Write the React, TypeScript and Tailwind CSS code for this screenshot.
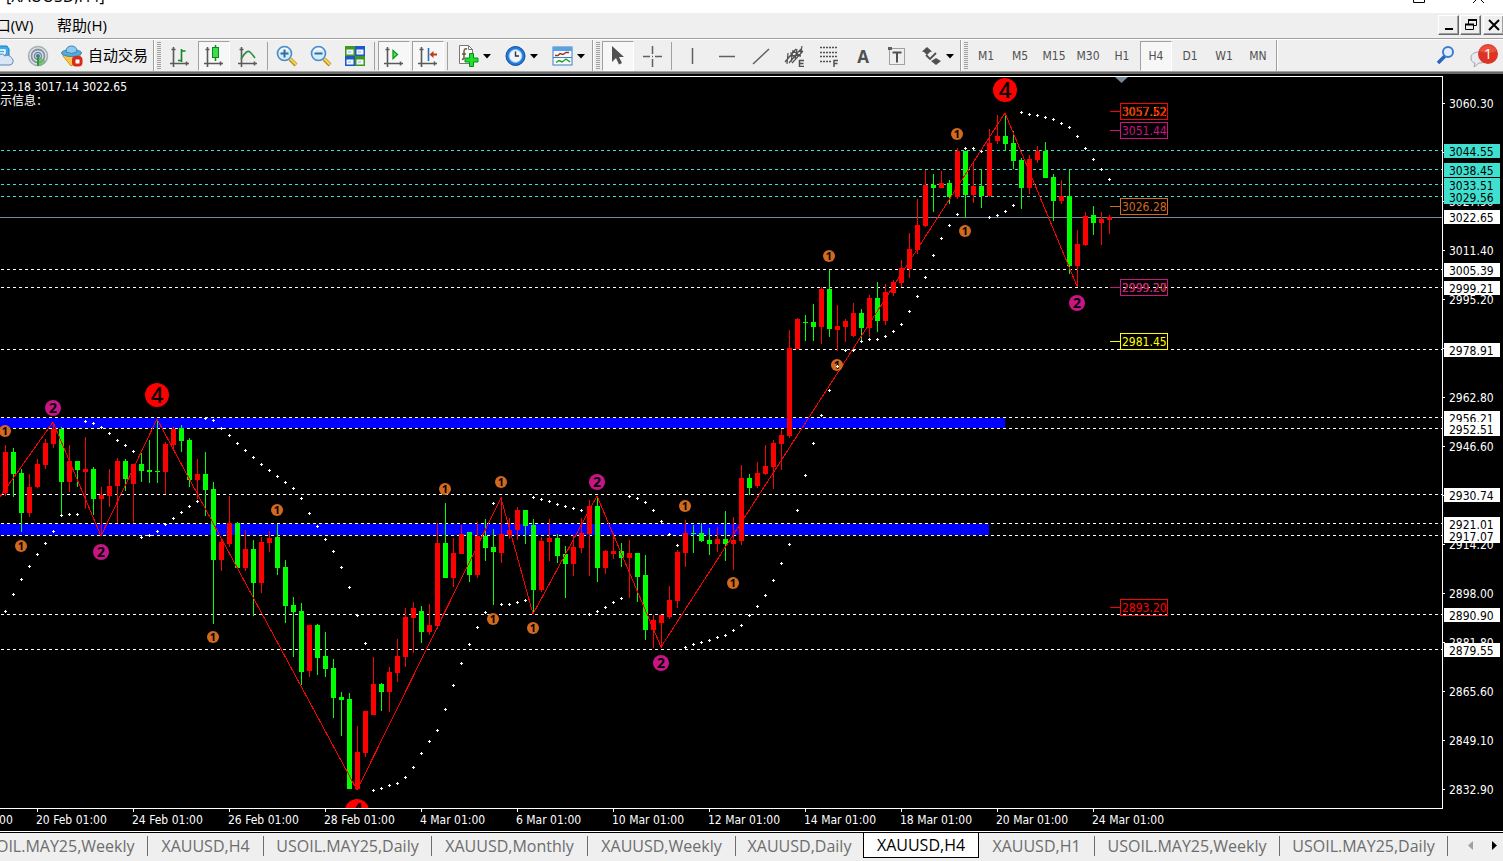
import type { ReactNode } from "react";

type Candle = ["r" | "g", number, number, number, number];

// colour, high, body top, body bottom, low; one candle every 8px starting at x = 5
const candles: Candle[] = [
  ["r", 445, 452, 493, 496], ["g", 448, 452, 474, 497], ["g", 469, 473, 513, 532], ["r", 474, 487, 513, 517],
  ["r", 459, 464, 487, 488], ["r", 439, 443, 465, 469], ["r", 422, 429, 444, 448], ["g", 427, 429, 482, 515],
  ["r", 445, 461, 482, 492], ["g", 461, 461, 470, 487], ["r", 437, 469, 472, 509], ["g", 467, 469, 499, 515],
  ["r", 487, 495, 499, 536], ["r", 469, 486, 496, 507], ["r", 458, 461, 486, 523], ["g", 459, 461, 479, 491],
  ["r", 464, 464, 484, 523], ["g", 453, 464, 471, 482], ["g", 440, 470, 472, 483], ["g", 419, 471, 472, 483],
  ["r", 442, 444, 472, 494], ["r", 427, 429, 445, 449], ["g", 425, 428, 441, 452], ["g", 438, 440, 480, 487],
  ["r", 459, 474, 480, 499], ["g", 452, 474, 490, 516], ["g", 482, 489, 560, 624], ["r", 538, 542, 560, 571],
  ["r", 496, 523, 544, 547], ["g", 522, 523, 568, 568], ["r", 530, 549, 568, 571], ["g", 540, 549, 583, 616],
  ["r", 537, 542, 583, 593], ["r", 531, 538, 543, 552], ["g", 524, 537, 568, 575], ["g", 560, 567, 606, 623],
  ["g", 597, 605, 612, 657], ["g", 603, 611, 672, 685], ["r", 625, 625, 671, 677], ["g", 624, 625, 658, 675],
  ["g", 632, 656, 669, 677], ["g", 659, 668, 698, 718], ["g", 692, 697, 700, 736], ["g", 693, 699, 789, 789],
  ["r", 726, 752, 789, 790], ["r", 711, 711, 753, 757], ["r", 657, 684, 715, 715], ["g", 683, 684, 692, 711],
  ["r", 667, 672, 692, 712], ["r", 639, 656, 673, 682], ["r", 608, 617, 657, 667], ["r", 602, 608, 618, 653],
  ["g", 606, 611, 632, 643], ["r", 604, 625, 632, 635], ["r", 523, 543, 626, 629], ["g", 503, 543, 578, 578],
  ["r", 538, 553, 578, 587], ["r", 525, 534, 554, 554], ["g", 532, 532, 575, 582], ["r", 522, 536, 575, 578],
  ["g", 519, 536, 548, 561], ["g", 529, 547, 552, 605], ["r", 497, 534, 553, 563], ["r", 518, 530, 535, 539],
  ["r", 507, 510, 530, 540], ["g", 510, 510, 526, 544], ["g", 519, 525, 590, 614], ["r", 537, 541, 590, 592],
  ["r", 519, 538, 542, 561], ["g", 534, 538, 556, 563], ["g", 546, 554, 564, 598], ["r", 535, 547, 564, 576],
  ["r", 518, 533, 548, 553], ["r", 500, 506, 534, 576], ["g", 496, 506, 568, 582], ["r", 550, 551, 568, 574],
  ["r", 533, 551, 554, 559], ["g", 543, 551, 558, 567], ["r", 540, 553, 558, 598], ["g", 553, 553, 577, 602],
  ["g", 555, 575, 630, 640], ["r", 615, 620, 630, 648], ["r", 615, 615, 623, 648], ["r", 586, 600, 617, 619],
  ["r", 550, 552, 601, 608], ["r", 520, 533, 553, 567], ["g", 525, 533, 534, 553], ["g", 523, 533, 541, 542],
  ["g", 528, 540, 544, 555], ["r", 527, 539, 544, 552], ["g", 511, 539, 544, 561], ["r", 517, 540, 544, 570],
  ["r", 465, 478, 541, 545], ["g", 474, 478, 488, 495], ["r", 462, 473, 486, 488], ["r", 445, 466, 474, 475],
  ["r", 440, 443, 467, 489], ["r", 429, 435, 444, 470], ["r", 330, 348, 436, 438], ["r", 318, 319, 349, 349],
  ["g", 315, 322, 323, 341], ["g", 304, 322, 327, 341], ["r", 287, 289, 327, 344], ["g", 270, 289, 329, 337],
  ["r", 305, 326, 330, 351], ["r", 319, 321, 327, 342], ["r", 303, 313, 336, 337], ["g", 309, 313, 328, 341],
  ["r", 295, 298, 328, 337], ["g", 282, 298, 321, 332], ["r", 284, 292, 321, 325], ["r", 280, 282, 293, 296],
  ["r", 260, 268, 283, 287], ["r", 233, 249, 269, 278], ["r", 199, 225, 250, 254], ["r", 170, 185, 226, 227],
  ["g", 174, 185, 188, 212], ["r", 171, 183, 188, 188], ["g", 180, 183, 197, 204], ["r", 148, 151, 197, 199],
  ["g", 151, 151, 195, 218], ["r", 162, 186, 195, 203], ["g", 169, 186, 196, 208], ["r", 129, 143, 196, 197],
  ["r", 115, 136, 141, 144], ["g", 113, 136, 144, 151], ["g", 131, 143, 161, 169], ["g", 158, 160, 188, 209],
  ["r", 155, 159, 188, 194], ["r", 146, 151, 160, 163], ["g", 142, 151, 178, 178], ["g", 174, 177, 201, 221],
  ["r", 180, 196, 201, 204], ["g", 170, 196, 266, 274], ["r", 230, 244, 266, 287], ["r", 212, 216, 245, 246],
  ["g", 206, 215, 223, 235], ["r", 212, 219, 223, 245], ["r", 215, 217, 220, 234],
];

// parabolic SAR, one value per candle
const sar: number[] = [
  611, 594, 579, 566, 554, 543, 531, 515, 514, 514, 421, 423, 427, 433, 440, 445, 451, 537, 535, 531, 524, 518, 512,
  506, 501, 418, 420, 428, 435, 443, 450, 457, 464, 470, 476, 482, 488, 498, 513, 526, 539, 551, 567, 587, 615, 643,
  790, 788, 785, 783, 777, 767, 753, 741, 730, 709, 685, 663, 644, 627, 612, 503, 604, 604, 602, 600, 497, 499, 501,
  504, 506, 508, 510, 614, 611, 607, 602, 598, 496, 498, 502, 510, 521, 534, 545, 647, 644, 642, 640, 637, 635, 630,
  625, 615, 606, 595, 580, 563, 544, 510, 475, 443, 415, 390, 366, 350, 350, 341, 339, 339, 336, 331, 324, 311, 296,
  277, 255, 238, 225, 214, 148, 148, 151, 217, 215, 211, 205, 112, 114, 115, 117, 119, 123, 127, 136, 148, 159, 169,
  179,
];

const levels: { y: number; price: string; teal?: boolean }[] = [
  { y: 150, price: "3044.55", teal: true },
  { y: 169, price: "3038.45", teal: true },
  { y: 184, price: "3033.51", teal: true },
  { y: 196, price: "3029.56", teal: true },
  { y: 269, price: "3005.39" },
  { y: 287, price: "2999.21" },
  { y: 349, price: "2978.91" },
  { y: 417, price: "2956.21" },
  { y: 428, price: "2952.51" },
  { y: 494, price: "2930.74" },
  { y: 523, price: "2921.01" },
  { y: 535, price: "2917.07" },
  { y: 614, price: "2890.90" },
  { y: 649, price: "2879.55" },
];

const scale: [number, string][] = [
  [103, "3060.30"], [201, "3027.90"], [250, "3011.40"], [299, "2995.20"], [397, "2962.80"], [446, "2946.60"],
  [544, "2914.20"], [593, "2898.00"], [642, "2881.80"], [691, "2865.60"], [740, "2849.10"], [789, "2832.90"],
];

const dates = [
  "20 Feb 01:00", "24 Feb 01:00", "26 Feb 01:00", "28 Feb 01:00", "4 Mar 01:00", "6 Mar 01:00", "10 Mar 01:00",
  "12 Mar 01:00", "14 Mar 01:00", "18 Mar 01:00", "20 Mar 01:00", "24 Mar 01:00",
];

const waveMarks: [number, number, 1 | 2 | 4][] = [
  [5, 431, 1], [21, 546, 1], [213, 637, 1], [277, 510, 1], [445, 489, 1], [501, 482, 1], [493, 619, 1], [533, 628, 1],
  [685, 506, 1], [733, 583, 1], [829, 256, 1], [837, 365, 1], [957, 134, 1], [965, 231, 1],
  [53, 408, 2], [101, 552, 2], [597, 482, 2], [661, 663, 2], [1077, 303, 2],
  [157, 395, 4], [1005, 90, 4], [357, 811, 4],
];

const markStyle = {
  1: { r: 6, fill: "#d2691e", size: 11, weight: 700, drop: 4 },
  2: { r: 8, fill: "#c71585", size: 14, weight: 700, drop: 5 },
  4: { r: 12, fill: "#ff0000", size: 22, weight: 600, drop: 8 },
};

const tags: { y: number; text: string; color: string; under?: string; underColor?: string }[] = [
  { y: 111, text: "3057.62", color: "#ff0000", under: "3057.52", underColor: "#ffff00" },
  { y: 130, text: "3051.44", color: "#c71585" },
  { y: 206, text: "3026.28", color: "#d2691e" },
  { y: 287, text: "2999.27", color: "#c71585", under: "2999.20", underColor: "#d2691e" },
  { y: 341, text: "2981.45", color: "#ffff00" },
  { y: 607, text: "2893.20", color: "#ff0000" },
];

const chartFont = "font-['DejaVu_Sans_Condensed','DejaVu_Sans',sans-serif] text-[12px]";

function Plot() {
  return (
    <svg role="img" aria-label="XAUUSD H4 chart" className={"block h-[757px] min-w-0 flex-1 " + chartFont}>
      <g transform="translate(0,-74)">
        <g shapeRendering="crispEdges">
          <rect x={0} y={418} width={1005} height={10} fill="#0000ff" />
          <rect x={0} y={524} width={989} height={11} fill="#0000ff" />
          <rect x={0} y={217} width="100%" height={1} fill="#778899" />
          {levels.map((l) => (
            <line
              key={l.y}
              x1={1}
              x2="100%"
              y1={l.y + 0.5}
              y2={l.y + 0.5}
              stroke={l.teal ? "#40e0d0" : "#ffffff"}
              strokeDasharray="3 3"
            />
          ))}
          {candles.map(([c, high, top, bottom, low], i) => (
            <g key={i} fill={c === "r" ? "#ff0000" : "#00ff00"}>
              <rect x={5 + i * 8} y={high} width={1} height={low - high} />
              <rect x={3 + i * 8} y={top} width={5} height={bottom - top} />
            </g>
          ))}
          <polyline
            fill="none"
            stroke="#ff0000"
            points="-3,501 53,422 101,536 157,419 357,790 501,498 533,614 597,496 661,647 1005,113 1077,286"
          />
        </g>
        {waveMarks.map(([x, y, n]) => (
          <g key={x + "-" + y}>
            <circle cx={x} cy={y} r={markStyle[n].r} fill={markStyle[n].fill} />
            <text
              x={x}
              y={y + markStyle[n].drop}
              textAnchor="middle"
              fontSize={markStyle[n].size}
              fontWeight={markStyle[n].weight}
              fontFamily="'Open Sans', 'Noto Sans', sans-serif"
              fill="#000000"
            >
              {n}
            </text>
          </g>
        ))}
        <g shapeRendering="crispEdges" fill="#ffffff">
          {sar.map((y, i) => (
            <path key={i} d={`M${4 + i * 8} ${y}h1v-1h1v1h1v1h-1v1h-1v-1h-1z`} />
          ))}
        </g>
        {tags.map((t) => (
          <g key={t.y}>
            <path
              d={`M1110 ${t.y + 0.5}h10M1120.5 ${t.y - 7.5}h47v16h-47z`}
              fill="none"
              stroke={t.color}
              shapeRendering="crispEdges"
            />
            {t.under && (
              <text x={1122} y={t.y + 5} fill={t.underColor}>
                {t.under}
              </text>
            )}
            <text x={1122} y={t.y + 5} fill={t.color}>
              {t.text}
            </text>
          </g>
        ))}
        <path d="M1115 77h13l-6.500 6z" fill="#778899" />
        <text x={0} y={91} fill="#ffffff">
          23.18 3017.14 3022.65
        </text>
        <text x={0} y={105} fill="#ffffff" fontFamily="'Noto Sans CJK SC', sans-serif">
          示信息：
        </text>
        <g shapeRendering="crispEdges">
          <rect x={0} y={808} width="100%" height={24} fill="#000000" />
          <rect x={0} y={76} width="100%" height={1} fill="#ffffff" />
          <rect x={0} y={808} width="100%" height={1} fill="#ffffff" />
          {dates.map((d, i) => (
            <rect key={d} x={37 + i * 96} y={808} width={1} height={4} fill="#ffffff" />
          ))}
        </g>
        <text x={-58} y={824} fill="#ffffff">
          18 Feb 01:00
        </text>
        {dates.map((d, i) => (
          <text key={d} x={36 + i * 96} y={824} fill="#ffffff">
            {d}
          </text>
        ))}
      </g>
    </svg>
  );
}

function PriceScale() {
  const ticks = [103, 152, 201, 250, 299, 348, 397, 446, 495, 544, 593, 642, 691, 740, 789];
  return (
    <svg role="img" aria-label="Price scale" className={"block h-[757px] w-[61px] shrink-0 " + chartFont}>
      <g transform="translate(0,-74)">
        <rect x={0} y={76} width={1} height={733} fill="#ffffff" />
        {ticks.map((y) => (
          <rect key={y} x={1} y={y} width={2} height={1} fill="#ffffff" />
        ))}
        {scale.map(([y, p]) => (
          <text key={y} x={7} y={y + 5} fill="#ffffff">
            {p}
          </text>
        ))}
        {levels.map((l) => (
          <g key={l.y}>
            <rect x={2} y={l.y - 6} width={56} height={14} fill={l.teal ? "#40e0d0" : "#ffffff"} />
            <text x={7} y={l.y + 6} fill="#000000">
              {l.price}
            </text>
          </g>
        ))}
        <rect x={2} y={210} width={56} height={14} fill="#ffffff" />
        <text x={7} y={222} fill="#000000">
          3022.65
        </text>
      </g>
    </svg>
  );
}

function ToolButton({ label, pressed, children }: { label: string; pressed?: boolean; children: ReactNode }) {
  return (
    <button
      type="button"
      aria-label={label}
      aria-pressed={pressed}
      className={
        "flex h-[30px] w-8 shrink-0 items-center justify-center " +
        (pressed ? "border border-t-[#a0a0a0] border-r-white border-b-white border-l-[#a0a0a0] bg-[#f7f7f7]" : "")
      }
    >
      {children}
    </button>
  );
}

function DropButton({ label, children }: { label: string; children: ReactNode }) {
  return (
    <button type="button" aria-label={label} className="flex h-[30px] w-[45px] shrink-0 items-center gap-[3px] pl-[6px]">
      {children}
      <svg width="8" height="5" viewBox="0 0 8 5" className="mt-[2px]">
        <path d="M0 0h8L4 4.500z" fill="#000" />
      </svg>
    </button>
  );
}

function Divider() {
  return <div className="mx-[3px] h-7 w-px shrink-0 bg-[#a0a0a0]" />;
}

function Grip() {
  return (
    <div className="flex h-full shrink-0 items-center">
      <div className="h-full w-[2px] border-r border-l border-r-white border-l-[#a0a0a0]" />
      <div className="mx-[2px] h-7 w-[4px] bg-[repeating-linear-gradient(to_bottom,#a0a0a0_0_1px,#efefef_1px_2px)]" />
    </div>
  );
}

function Axes() {
  return <path d="M4.500 2v20M1 18.500h19M2.500 4.500h4M17.500 16.500v4" stroke="#5a5a5a" strokeWidth="1.600" fill="none" />;
}

function Icon({ children, w = 22 }: { children: ReactNode; w?: number }) {
  return (
    <svg width={w} height="22" viewBox={`0 0 ${w} 22`} fill="none" className="shrink-0">
      {children}
    </svg>
  );
}

function Magnifier({ plus }: { plus?: boolean }) {
  return (
    <Icon>
      <path d="M14 14l6 6" stroke="#b8901c" strokeWidth="4" />
      <path d="M14 13.500l6 6" stroke="#f3d65a" strokeWidth="2" />
      <circle cx="8.500" cy="8.500" r="7" fill="#d5ecfb" stroke="#4b8bc8" strokeWidth="1.600" />
      <path d="M4 7a5 5 0 0 1 8-2" stroke="#fff" strokeWidth="1.500" />
      <path d={plus ? "M4.500 8.500h8M8.500 4.500v8" : "M4.500 8.500h8"} stroke="#2f6f9f" strokeWidth="2" />
    </Icon>
  );
}

function Toolbar() {
  const periods = ["M1", "M5", "M15", "M30", "H1", "H4", "D1", "W1", "MN"];
  return (
    <div
      role="toolbar"
      className="flex h-8 items-center overflow-hidden border-b border-[#a0a0a0] bg-[#efefef] text-[#505050]"
    >
      <button type="button" aria-label="Virtual hosting" className="h-[30px] w-[22px] shrink-0">
        <Icon w={16}>
          <path d="M-4 3q0-2 2-2h9l2 3v9H-4z" fill="#3fa9ee" stroke="#1b7fc4" />
          <path d="M-2 5h7v3h-7M-2 10h7" stroke="#fff" strokeWidth="1.500" />
          <path d="M-4 20h14a4 4 0 0 0 1-7.500 4 4 0 0 0-6-1.500 5 5 0 0 0-9 3z" fill="#dbe6f4" stroke="#5f82b8" />
        </Icon>
      </button>
      <button type="button" aria-label="Signals" className="flex h-[30px] w-8 shrink-0 items-center justify-center">
        <Icon>
          <circle cx="11" cy="11" r="9.500" fill="#e3e7ea" stroke="#a4afb6" strokeWidth="1.600" />
          <circle cx="11" cy="11" r="6.500" stroke="#8592a0" strokeWidth="1.800" />
          <circle cx="11" cy="11" r="3.500" stroke="#748494" strokeWidth="1.500" />
          <path d="M11 11v10a10 10 0 0 0 8-5z" fill="#5cb85c" opacity=".7" />
          <circle cx="11" cy="11" r="2" fill="#3a73b8" />
          <path d="M11 11v10" stroke="#2f9a3a" strokeWidth="2" />
        </Icon>
      </button>
      <button type="button" className="flex h-[30px] w-24 shrink-0 items-center gap-[5px] pl-[7px] text-black">
        <Icon>
          <path d="M2 11l8 10 9-6V8H2z" fill="#f6c945" stroke="#c99a1c" />
          <ellipse cx="10.500" cy="8" rx="10" ry="3.500" fill="#5aa9dc" stroke="#3782b5" />
          <path d="M5 7q0-6 5.500-6T16 7q-5 3-11 0z" fill="#8ccbf0" stroke="#3782b5" />
          <rect x="11" y="11" width="10.500" height="10.500" rx="4" fill="#d62a1a" />
          <rect x="14.500" y="14.500" width="4" height="4" fill="#fff" />
        </Icon>
        <span className="pb-[2px] text-[15px] leading-5 whitespace-nowrap">自动交易</span>
      </button>
      <div className="w-[3px] shrink-0" />
      <Grip />
      <div className="ml-px flex shrink-0 items-center gap-[2px]">
        <ToolButton label="Bar chart">
          <Icon>
            <Axes />
            <path d="M12.500 4v13M9 15.500h3M13 6h3.500" stroke="#0a8a1c" strokeWidth="1.600" />
          </Icon>
        </ToolButton>
        <ToolButton label="Candlesticks" pressed>
          <Icon>
            <Axes />
            <path d="M12.500 0v16" stroke="#0a8a1c" strokeWidth="1.500" />
            <rect x="9.500" y="2.500" width="6" height="10" fill="#3fdc4c" stroke="#0a8a1c" />
          </Icon>
        </ToolButton>
        <ToolButton label="Line chart">
          <Icon>
            <Axes />
            <path d="M4 14q6-10 9-7t5 6" stroke="#2f8f3c" strokeWidth="1.600" />
          </Icon>
        </ToolButton>
      </div>
      <Divider />
      <div className="flex shrink-0 items-center gap-[2px]">
        <ToolButton label="Zoom in">
          <Magnifier plus />
        </ToolButton>
        <ToolButton label="Zoom out">
          <Magnifier />
        </ToolButton>
        <ToolButton label="Tile windows">
          <Icon>
            <rect x="1" y="1" width="10" height="10" fill="#3f9a1c" />
            <rect x="11" y="1" width="10" height="10" fill="#1f56c8" />
            <rect x="1" y="11" width="10" height="10" fill="#1f56c8" />
            <rect x="11" y="11" width="10" height="10" fill="#3f9a1c" />
            <path d="M2.500 4.500h7v5h-7zM12.500 4.500h7v5h-7zM2.500 14.500h7v5h-7zM12.500 14.500h7v5h-7z" fill="#eef5ff" />
            <path d="M4 7h3M14 7h3M4 17h3M14 17h3" stroke="#9ab4d8" />
          </Icon>
        </ToolButton>
      </div>
      <Divider />
      <div className="flex shrink-0 items-center gap-[2px]">
        <ToolButton label="Auto scroll" pressed>
          <Icon>
            <Axes />
            <path d="M10 5.500v8l4.500-4z" fill="#5fe06a" stroke="#0a9a1c" strokeWidth="1.300" />
          </Icon>
        </ToolButton>
        <ToolButton label="Chart shift" pressed>
          <Icon>
            <Axes />
            <path d="M11.500 3v13" stroke="#2671b8" strokeWidth="1.600" />
            <path d="M12.500 9.500l4-3.500v2.500H20v2h-3.500V13z" fill="#c23c10" />
          </Icon>
        </ToolButton>
      </div>
      <Divider />
      <div className="ml-px flex shrink-0 items-center gap-[2px]">
        <DropButton label="Indicators">
          <Icon>
            <path d="M1.500.5h9l4 4v14h-13z" fill="#fafafa" stroke="#777" />
            <path d="M10.500.5v4h4" stroke="#777" />
            <path d="M9 4q-3-1-3 3v5q0 3-2 2M4 9h4" stroke="#6b5a3a" strokeWidth="1.500" />
            <path d="M11.500 8.500h4v4.500H20v4h-4.500v4.500h-4V17H7v-4h4.500z" fill="#1fe02c" stroke="#0a8a1c" />
          </Icon>
        </DropButton>
        <DropButton label="Periodicity">
          <Icon>
            <circle cx="10.500" cy="11" r="9.500" fill="#1f78dc" stroke="#0b4f9f" />
            <circle cx="10.500" cy="11" r="6.500" fill="#edf4fb" stroke="#8fb9e6" />
            <path d="M10.500 6.500V11H14" stroke="#333" strokeWidth="1.400" />
          </Icon>
        </DropButton>
        <DropButton label="Templates">
          <Icon>
            <rect x="1" y="2" width="19" height="18" fill="#f4faff" stroke="#3c7fc0" />
            <rect x="1" y="2" width="19" height="4" fill="#5aa2e4" />
            <path d="M1 12.500h19" stroke="#3c7fc0" />
            <path d="M3 10.500h3l2-2 3 1 3-2h3" stroke="#a0341c" strokeWidth="1.400" />
            <path d="M4 17.500l3-2 3 1.500 4-3 4 3" stroke="#1f9a2c" strokeWidth="1.400" />
          </Icon>
        </DropButton>
      </div>
      <div className="w-px shrink-0" />
      <Grip />
      <div className="flex shrink-0 items-center gap-[2px]">
        <ToolButton label="Cursor" pressed>
          <Icon>
            <path d="M5 1v16l4-4 3 6.500 3-1.500-3-6h5z" fill="#505050" />
          </Icon>
        </ToolButton>
        <ToolButton label="Crosshair">
          <Icon>
            <path d="M11.500 1v8M11.500 14v8M2 11.500h7M14 11.500h7M11 11.500h1" stroke="#606060" strokeWidth="1.500" />
          </Icon>
        </ToolButton>
      </div>
      <Divider />
      <div className="ml-[2px] flex shrink-0 items-center gap-[2px]">
        <ToolButton label="Vertical line">
          <Icon>
            <path d="M10.500 3v16" stroke="#606060" strokeWidth="1.500" />
          </Icon>
        </ToolButton>
        <ToolButton label="Horizontal line">
          <Icon>
            <path d="M3 11.500h16" stroke="#606060" strokeWidth="1.500" />
          </Icon>
        </ToolButton>
        <ToolButton label="Trend line">
          <Icon>
            <path d="M3 19L19 4" stroke="#606060" strokeWidth="1.500" />
          </Icon>
        </ToolButton>
        <ToolButton label="Equidistant channel">
          <Icon>
            <path
              d="M1 17L12 4M5 18L17 4M8 18L19 6M4 8l-1 11M9 5L7 17M13 4l-2 11M18 1l-2 11M3 12l14-3M6 8l13-2"
              stroke="#505050"
              strokeWidth="1.200"
            />
            <path d="M20 15.500h-4.500v6H20M15.500 18.500h4" stroke="#505050" strokeWidth="1.500" />
          </Icon>
        </ToolButton>
        <ToolButton label="Fibonacci retracement">
          <Icon>
            <path
              d="M2 2.500h18M2 7.500h18M2 11.500h18M2 16.500h12"
              stroke="#505050"
              strokeWidth="1.300"
              strokeDasharray="2 1"
            />
            <path d="M20 15.500h-4v7M16 18.500h3.500" stroke="#505050" strokeWidth="1.500" />
          </Icon>
        </ToolButton>
        <ToolButton label="Text">
          <span className="pt-[2px] font-['Open_Sans',sans-serif] text-[17px] leading-5 font-bold">A</span>
        </ToolButton>
        <ToolButton label="Text label">
          <Icon>
            <rect x="3.500" y="3.500" width="15" height="16" stroke="#505050" strokeDasharray="1 1" />
            <path d="M6.500 7.500h9M11 7.500v10" stroke="#505050" strokeWidth="2" />
            <path d="M2 2h4v3H2z" fill="#606060" />
          </Icon>
        </ToolButton>
        <DropButton label="Arrows">
          <Icon>
            <path d="M6 2l5 4.500-2 .5-3 3-3-3-2-.5zM15 20l-5-4 2-1 3-2 3 2 2 1z" fill="#505050" />
            <path d="M5 10l4 4 6-6" stroke="#505050" strokeWidth="1.800" />
          </Icon>
        </DropButton>
      </div>
      <Grip />
      <div className="flex shrink-0 items-center gap-[2px] font-['DejaVu_Sans_Condensed','DejaVu_Sans',sans-serif] text-[12px]">
        {periods.map((p) => (
          <ToolButton key={p} label={p} pressed={p === "H4"}>
            {p}
          </ToolButton>
        ))}
      </div>
      <div className="ml-[2px] h-full w-[2px] shrink-0 border-r border-l border-r-white border-l-[#a0a0a0]" />
      <button type="button" aria-label="Search" className="ml-auto shrink-0">
        <Icon>
          <path d="M3 18l7-7" stroke="#2b62c4" strokeWidth="3.500" />
          <circle cx="13" cy="7" r="5" fill="#e3effb" stroke="#3f7ad2" strokeWidth="2" />
        </Icon>
      </button>
      <button type="button" aria-label="Notifications" className="mr-1 ml-3 flex shrink-0">
        <svg width="30" height="30" viewBox="0 0 30 30" fill="none">
          <path d="M10 11c-6 0-8 3-8 6s2 5 4 5l-1 4 5-4c6 0 9-2 9-6z" fill="#e8eaf0" stroke="#a2a6b0" />
          <circle cx="19" cy="13" r="10" fill="#dd3322" />
          <path d="M10 10a10 10 0 0 1 18 0q-9 4-18 0z" fill="#ee6650" opacity=".6" />
          <text
            x="19"
            y="18"
            textAnchor="middle"
            fontSize="15"
            fontFamily="'Open Sans', sans-serif"
            fill="#fff"
          >
            1
          </text>
        </svg>
      </button>
    </div>
  );
}

function TitleStrip() {
  return (
    <header className="flex h-[13px] items-end justify-between overflow-hidden bg-white pb-[7px] text-base">
      <span className="pl-[6px] font-['Open_Sans',sans-serif] leading-5">[XAUUSD,H4]</span>
      <svg width="90" height="16" viewBox="0 0 90 16" fill="none" stroke="#000" className="shrink-0">
        <path d="M.5 1.500h11v11H.5z" />
        <path d="M60 2l11 11M71 2L60 13" />
      </svg>
    </header>
  );
}

function WindowButton({ label, children }: { label: string; children: ReactNode }) {
  return (
    <button
      type="button"
      aria-label={label}
      className="flex h-5 w-[21px] items-center justify-center border border-t-white border-r-[#696969] border-b-[#696969] border-l-white bg-[#efefef] shadow-[inset_-1px_-1px_0_#a0a0a0]"
    >
      <svg width="16" height="16" viewBox="0 0 16 16" fill="none" stroke="#000">
        {children}
      </svg>
    </button>
  );
}

function MenuBar() {
  return (
    <nav className="flex h-[27px] items-center justify-between overflow-hidden border-b border-white bg-[#efefef] shadow-[inset_0_-1px_0_#a0a0a0]">
      <div className="flex pb-[3px] text-[15px] leading-5">
        <button type="button" className="-ml-[22px] w-[58px] whitespace-nowrap">
          窗口(W)
        </button>
        <button type="button" className="ml-[21px] whitespace-nowrap">
          帮助(H)
        </button>
      </div>
      <div className="-mr-px mb-[3px] flex">
        <WindowButton label="Minimize">
          <path d="M4 12h8" strokeWidth="2" />
        </WindowButton>
        <div className="mr-[2px] ml-[1px]">
          <WindowButton label="Restore">
            <path d="M5.500 7V3h8v5.500h-3M2.500 7.500h8v5h-8z" />
            <path d="M5 3h9M2 7.500h9" strokeWidth="2" />
          </WindowButton>
        </div>
        <WindowButton label="Close">
          <path d="M3 3l10 10M13 3L3 13" strokeWidth="2" />
        </WindowButton>
      </div>
    </nav>
  );
}

function ChartTabs() {
  const active = 6;
  const tabs: [string, string][] = [
    ["USOIL.MAY25,Weekly", "-ml-[37px] w-[185px]"],
    ["XAUUSD,H4", "w-[116px]"],
    ["USOIL.MAY25,Daily", "w-[168px]"],
    ["XAUUSD,Monthly", "w-[156px]"],
    ["XAUUSD,Weekly", "w-[148px]"],
    ["XAUUSD,Daily", "w-[127px]"],
    ["XAUUSD,H4", "w-[116px]"],
    ["XAUUSD,H1", "w-[116px]"],
    ["USOIL.MAY25,Weekly", "w-[185px]"],
    ["USOIL.MAY25,Daily", "w-[168px]"],
  ];
  return (
    <footer className="flex h-[27px] items-start overflow-hidden border-t border-black bg-[#efefef] font-['Open_Sans',sans-serif] text-base leading-5 text-[#6d6d6d]">
      {tabs.map(([name, width], i) => (
        <button
          type="button"
          key={i}
          className={
            "flex shrink-0 items-center justify-center whitespace-nowrap " +
            width +
            (i === active
              ? " h-[25px] border border-t-0 border-black bg-white text-black"
              : i === active - 1
                ? " mt-[3px] h-5"
                : " mt-[3px] h-5 border-r border-[#6d6d6d]")
          }
        >
          {name}
        </button>
      ))}
      <div className="ml-auto flex h-6 shrink-0 items-center bg-[#efefef] pr-[5px]">
        <button type="button" aria-label="Scroll tabs left" className="mr-[18px]">
          <svg width="6" height="9" viewBox="0 0 6 9" className="block">
            <path d="M5 0v9L0 4.500z" fill="#a0a0a0" />
          </svg>
        </button>
        <button type="button" aria-label="Scroll tabs right">
          <svg width="6" height="9" viewBox="0 0 6 9" className="block">
            <path d="M0 0v9l5-4.500z" fill="#000" />
          </svg>
        </button>
      </div>
    </footer>
  );
}

export default function App() {
  return (
    <div className="flex min-h-screen w-full flex-col overflow-hidden bg-[#efefef] font-['Open_Sans','Noto_Sans_CJK_SC',sans-serif] text-black">
      <TitleStrip />
      <MenuBar />
      <Toolbar />
      <main className="flex border-t-2 border-b border-t-[#696969] border-b-white bg-black">
        <Plot />
        <PriceScale />
      </main>
      <ChartTabs />
    </div>
  );
}
